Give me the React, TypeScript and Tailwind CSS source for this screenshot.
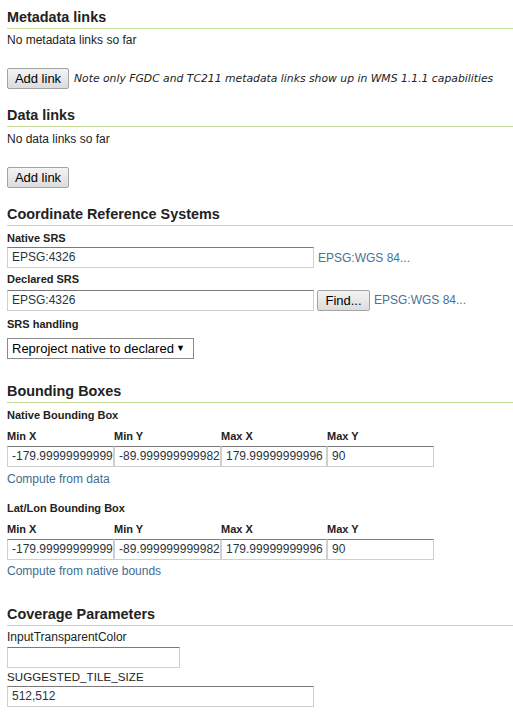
import React from "react";

const font = { fontFamily: '"Liberation Sans", Arial, sans-serif' };

function Heading({ children, mt }: { children: React.ReactNode; mt: string }) {
  return (
    <h2
      className={`${mt} h-[22px] border-b border-[#c6dc9b] text-[14.4px] font-bold leading-[21px] text-[#222]`}
    >
      {children}
    </h2>
  );
}

function Btn({ children, w }: { children: React.ReactNode; w: string }) {
  return (
    <button
      className={`${w} h-[21px] shrink-0 rounded-[2px] border border-[#a3a3a3] bg-gradient-to-b from-[#f4f4f4] to-[#dcdcdc] text-[13px] leading-[19px] text-black`}
      style={font}
    >
      {children}
    </button>
  );
}

function Input({ value, w }: { value: string; w: string }) {
  return (
    <div
      className={`${w} h-[21px] shrink-0 overflow-hidden whitespace-nowrap border border-[#cfcfcf] border-t-[#7a7a7a] bg-white pl-[4px] text-[12px] leading-[19px] text-[#2a3440]`}
    >
      {value}
    </div>
  );
}

function Label({ children, mt }: { children: React.ReactNode; mt: string }) {
  return <div className={`${mt} text-[11px] font-bold leading-[14px] text-[#222]`}>{children}</div>;
}

function BBox({ values }: { values: string[] }) {
  const labels = ["Min X", "Min Y", "Max X", "Max Y"];
  return (
    <>
      <div className="mt-[7px] grid grid-cols-[107px_107px_106px_107px]">
        {labels.map((l) => (
          <div key={l} className="text-[11px] font-bold leading-[14px] text-[#222]">
            {l}
          </div>
        ))}
      </div>
      <div className="mt-[3px] grid grid-cols-[107px_107px_106px_107px]">
        {values.map((v, i) => (
          <Input key={i} value={v} w="w-full" />
        ))}
      </div>
    </>
  );
}

export default function App() {
  return (
    <div className="min-h-[721px] w-[513px] bg-white pb-[13px] pl-[7px]" style={font}>
      <Heading mt="mt-[7px]">Metadata links</Heading>
      <div className="mt-[3px] text-[12px] leading-[16px] text-[#222]">No metadata links so far</div>
      <div className="mt-[20px] flex items-center">
        <Btn w="w-[62px]">Add link</Btn>
        <span
          className="ml-[5px] whitespace-nowrap text-[10.8px] italic leading-[20px] text-[#222]"
          style={{ fontFamily: '"DejaVu Sans", Verdana, sans-serif' }}
        >
          Note only FGDC and TC211 metadata links show up in WMS 1.1.1 capabilities
        </span>
      </div>

      <Heading mt="mt-[16px]">Data links</Heading>
      <div className="mt-[4px] text-[12px] leading-[16px] text-[#222]">No data links so far</div>
      <div className="mt-[20px] flex">
        <Btn w="w-[62px]">Add link</Btn>
      </div>

      <Heading mt="mt-[16px]">Coordinate Reference Systems</Heading>
      <Label mt="mt-[5px]">Native SRS</Label>
      <div className="mt-[2px] flex items-center">
        <Input value="EPSG:4326" w="w-[307px]" />
        <span className="ml-[4px] text-[12px] leading-[16px] text-[#4a7196]">EPSG:WGS 84...</span>
      </div>
      <Label mt="mt-[4px]">Declared SRS</Label>
      <div className="mt-[2px] flex items-center">
        <Input value="EPSG:4326" w="w-[307px]" />
        <div className="ml-[3px]">
          <Btn w="w-[53px]">Find...</Btn>
        </div>
        <span className="ml-[4px] text-[12px] leading-[16px] text-[#4a7196]">EPSG:WGS 84...</span>
      </div>
      <Label mt="mt-[5px]">SRS handling</Label>
      <div className="mt-[7px] flex h-[21px] w-[187px] items-center justify-between border border-[#8a8a8a] bg-white pl-[4px] pr-[8px] text-[13px] text-black">
        <span>Reproject native to declared</span>
        <span className="text-[9px]">▼</span>
      </div>

      <Heading mt="mt-[22px]">Bounding Boxes</Heading>
      <Label mt="mt-[5px]">Native Bounding Box</Label>
      <BBox values={["-179.99999999999", "-89.999999999982", "179.99999999996", "90"]} />
      <div className="mt-[4px] text-[12px] leading-[16px] text-[#3d6d90]">Compute from data</div>

      <Label mt="mt-[14px]">Lat/Lon Bounding Box</Label>
      <BBox values={["-179.99999999999", "-89.999999999982", "179.99999999996", "90"]} />
      <div className="mt-[3px] text-[12px] leading-[16px] text-[#3d6d90]">Compute from native bounds</div>

      <Heading mt="mt-[25px]">Coverage Parameters</Heading>
      <div className="mt-[4px] text-[12px] leading-[14px] text-[#222]">InputTransparentColor</div>
      <div className="mt-[3px]">
        <Input value="" w="w-[173px]" />
      </div>
      <div className="mt-[2px] text-[11.5px] leading-[14px] tracking-[0.1px] text-[#222]">SUGGESTED_TILE_SIZE</div>
      <div className="mt-[2px]">
        <Input value="512,512" w="w-[307px]" />
      </div>
    </div>
  );
}
